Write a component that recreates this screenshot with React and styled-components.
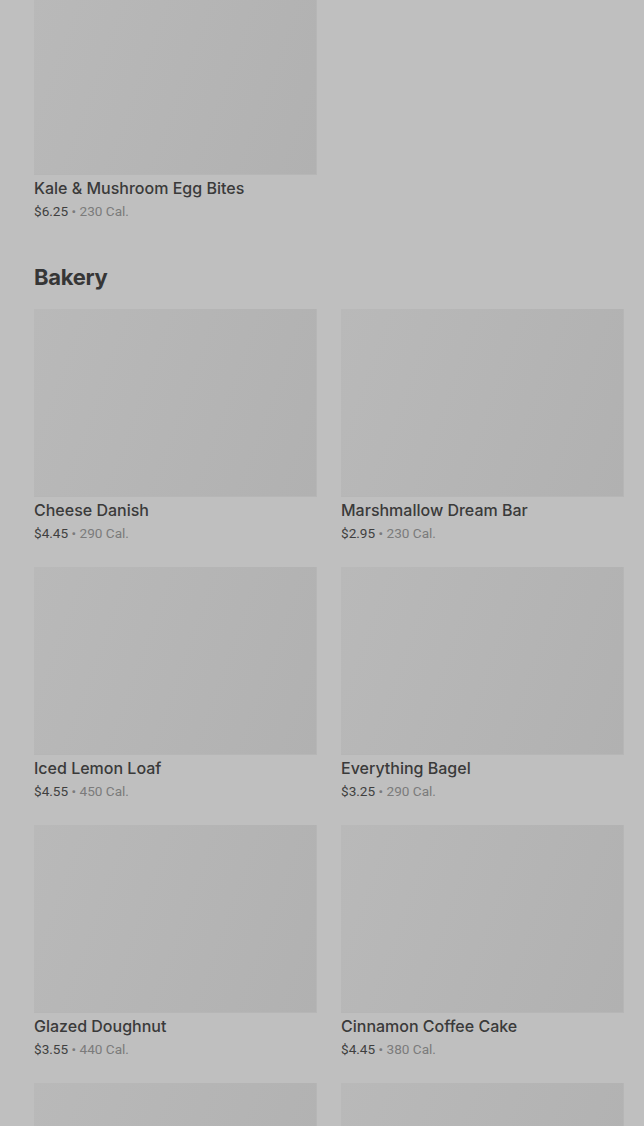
import React from 'react'
import styled, { createGlobalStyle } from 'styled-components'

const GlobalStyle = createGlobalStyle`
    html, body {
        margin: 0;
        padding: 0;
        background: #bfbfbf;
        font-family: Inter, "Noto Sans", sans-serif;
        overflow: hidden;
    }
`

const Page = styled.div`
    padding: 0 20px 0 34px;
    margin-top: -13px;
    display: flex;
    flex-direction: column;
    gap: 42px;
`

const Section = styled.section`
    display: flex;
    flex-direction: column;
`

const Heading = styled.h2`
    margin: 0 0 18px;
    font-size: 22px;
    line-height: 28px;
    font-weight: 700;
    letter-spacing: -0.3px;
    color: #363636;
`

const Grid = styled.div`
    display: grid;
    grid-template-columns: 283px 283px;
    column-gap: 24px;
    row-gap: 24px;
`

const Card = styled.div`
    display: flex;
    flex-direction: column;
`

const Photo = styled.div`
    height: 188px;
    background: linear-gradient(110deg, #b9b9b9 0%, #b5b5b5 50%, #b1b1b1 100%);
    box-shadow: inset -1px -1px 0 #b6b6b6;
`

const Name = styled.div`
    margin-top: 2px;
    font-size: 16px;
    line-height: 22px;
    font-weight: 500;
    color: #3a3a3a;
`

const Meta = styled.div`
    margin-top: 2px;
    font-family: Roboto, "Liberation Sans", sans-serif;
    font-size: 13.6px;
    line-height: 20px;
    color: #7b7b7b;
`

const Price = styled.span`
    color: #3f3f3f;
`

const breakfast = [
    { name: 'Kale & Mushroom Egg Bites', price: '$6.25', cal: 230 },
]

const bakery = [
    { name: 'Cheese Danish', price: '$4.45', cal: 290 },
    { name: 'Marshmallow Dream Bar', price: '$2.95', cal: 230 },
    { name: 'Iced Lemon Loaf', price: '$4.55', cal: 450 },
    { name: 'Everything Bagel', price: '$3.25', cal: 290 },
    { name: 'Glazed Doughnut', price: '$3.55', cal: 440 },
    { name: 'Cinnamon Coffee Cake', price: '$4.45', cal: 380 },
    { id: 'next-1' },
    { id: 'next-2' },
]

const Item = ({ item }) => (
    <Card>
        <Photo />
        {item.name && (
            <>
                <Name>{item.name}</Name>
                <Meta>
                    <Price>{item.price}</Price> • {item.cal} Cal.
                </Meta>
            </>
        )}
    </Card>
)

const App = () => {
    return (
        <>
            <GlobalStyle />
            <Page>
                <Section>
                    <Grid>
                        {breakfast.map((item) => <Item key={item.name} item={item} />)}
                    </Grid>
                </Section>
                <Section>
                    <Heading>Bakery</Heading>
                    <Grid>
                        {bakery.map((item) => <Item key={item.name || item.id} item={item} />)}
                    </Grid>
                </Section>
            </Page>
        </>
    )
}

export default App
